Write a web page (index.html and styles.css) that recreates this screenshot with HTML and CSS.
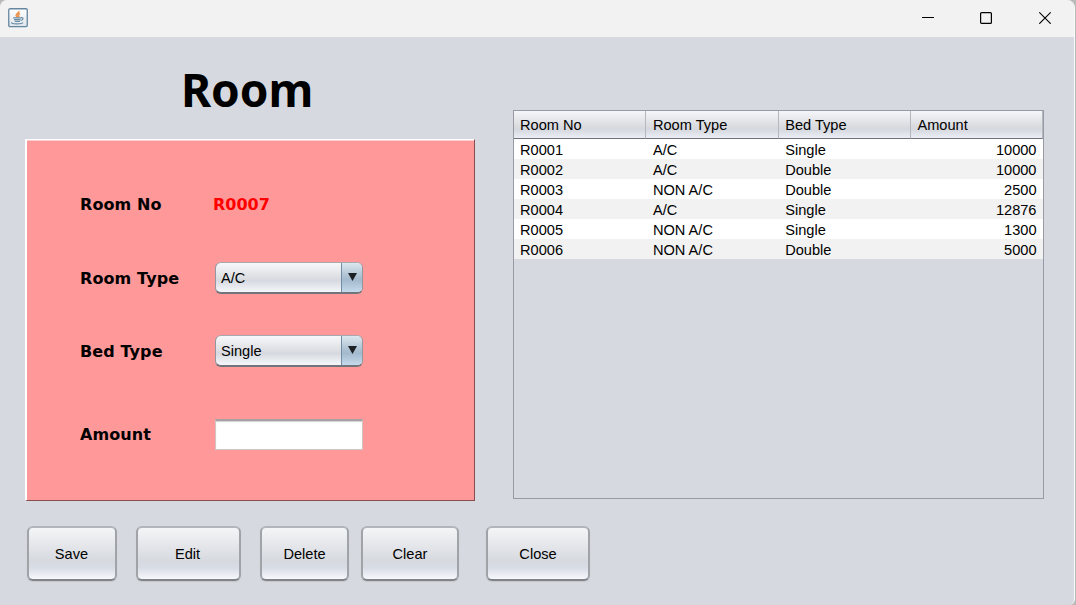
FILE: index.html
```html
<!DOCTYPE html>
<html lang="en">
<head>
<meta charset="utf-8">
<title>Room</title>
<link rel="stylesheet" href="styles.css">
</head>
<body>
<div class="window">
  <header class="titlebar">
    <svg class="app-icon" width="20" height="20" viewBox="0 0 20 20">
      <defs><linearGradient id="tile" x1="0" y1="0" x2="0" y2="1"><stop offset="0" stop-color="#fff"/><stop offset="1" stop-color="#dfe6ec"/></linearGradient></defs>
      <rect x=".75" y=".75" width="18.5" height="17.8" rx="1.2" fill="url(#tile)" stroke="#64869f" stroke-width="1.3"/>
      <path d="M10.8 3.2c.8 1.7-2.9 2.7-2.5 4.2.1.8.8 1.2 1.2 1.9M12 5.5c-1.7.8-2.2 1.5-1.4 2.4.5.6.2 1-.2 1.5" fill="none" stroke="#ee9550" stroke-width="1.7"/>
      <path d="M5.2 9.9h8M6 11.7h6.6M6.8 13.4h5.2" fill="none" stroke="#6c8da5" stroke-width="1.3"/>
      <path d="M13 9.8c2.8-.7 2.5 2.2-.2 2.7M3.8 14.4c-1.5 1.8 9.6 2.1 11.3.3" fill="none" stroke="#6c8da5" stroke-width="1.2"/>
    </svg>
    <div class="controls">
      <svg class="minimize" width="12" height="13" viewBox="0 0 12 13"><path d="M0 6.5h12" stroke="#000"/></svg>
      <svg width="12" height="13" viewBox="0 0 12 13"><rect x=".6" y="1.6" width="10.8" height="10.8" rx="1" fill="none" stroke="#000" stroke-width="1.2"/></svg>
      <svg width="12" height="13" viewBox="0 0 12 13"><path d="M.3 1.3l11.4 11.4M11.7 1.3L.3 12.7" stroke="#000" stroke-width="1.2"/></svg>
    </div>
  </header>
  <main class="content">
    <div class="top">
      <section class="left">
        <h1 class="title">Room</h1>
        <div class="form">
          <label class="label">Room No</label><span class="label room-id">R0007</span>
          <label class="label type-label">Room Type</label>
          <div class="combo"><span class="combo-value">A/C</span><span class="combo-button"><svg width="9" height="8" viewBox="0 0 9 8"><path d="M0 0h9L4.5 8z" fill="#1c2024"/></svg></span></div>
          <label class="label type-label">Bed Type</label>
          <div class="combo"><span class="combo-value">Single</span><span class="combo-button"><svg width="9" height="8" viewBox="0 0 9 8"><path d="M0 0h9L4.5 8z" fill="#1c2024"/></svg></span></div>
          <label class="label amount-label">Amount</label><input class="field" type="text">
        </div>
      </section>
      <div class="table-pane">
        <table class="table">
          <thead><tr><th>Room No</th><th>Room Type</th><th>Bed Type</th><th>Amount</th></tr></thead>
          <tbody>
            <tr><td>R0001</td><td>A/C</td><td>Single</td><td>10000</td></tr>
            <tr><td>R0002</td><td>A/C</td><td>Double</td><td>10000</td></tr>
            <tr><td>R0003</td><td>NON A/C</td><td>Double</td><td>2500</td></tr>
            <tr><td>R0004</td><td>A/C</td><td>Single</td><td>12876</td></tr>
            <tr><td>R0005</td><td>NON A/C</td><td>Single</td><td>1300</td></tr>
            <tr><td>R0006</td><td>NON A/C</td><td>Double</td><td>5000</td></tr>
          </tbody>
        </table>
      </div>
    </div>
    <div class="actions">
      <button class="button save">Save</button>
      <button class="button edit">Edit</button>
      <button class="button delete">Delete</button>
      <button class="button clear">Clear</button>
      <button class="button close">Close</button>
    </div>
  </main>
</div>
</body>
</html>
```
FILE: styles.css
```css
* { box-sizing: border-box; }
body {
  margin: 0;
  height: 605px;
  overflow: hidden;
  background: #b9b9b9;
  font: 14.6px "Liberation Sans", Arial, sans-serif;
  color: #000;
}
.window {
  display: flex;
  flex-direction: column;
  width: 1075px;
  height: 605px;
  overflow: hidden;
  border-right: 1px solid #fafafa;
  border-radius: 7px 8px 6px 0;
  background: #d6d9df;
}
.titlebar {
  flex: none;
  display: flex;
  justify-content: space-between;
  height: 37px;
  padding: 8px 23px 0 8px;
  background: #f2f2f2;
}
.controls { display: flex; gap: 47px; padding-top: 3px; }
.minimize { margin-right: -1px; }
.content { flex: 1; padding: 26px 0 0 25px; }
.top { display: flex; height: 438px; }
.left { width: 450px; }
.title {
  margin: 0;
  height: 76px;
  padding-left: 156px;
  font: bold 46px/52px "Noto Sans", "Open Sans", sans-serif;
  letter-spacing: -0.1px;
}
.form {
  display: grid;
  grid-template-columns: 134px 149px;
  grid-template-rows: 32px 32px 32px 32px;
  row-gap: 41px;
  align-items: center;
  width: 450px;
  height: 362px;
  padding: 49px 0 0 53px;
  border: 1px solid #fff;
  border-left-width: 2px;
  border-right-color: #8a4c4e;
  border-bottom-color: #8a4c4e;
  background: #ff9999;
  box-shadow: inset 0 1px #ffcfcf;
}
.label { font: bold 16px/20px "DejaVu Sans", sans-serif; letter-spacing: 0.1px; }
.room-id { color: red; margin-left: -1px; letter-spacing: 0; }
.type-label { margin-top: 2px; }
.amount-label { margin-top: 21px; }
.combo {
  display: flex;
  width: 148px;
  height: 32px;
  margin: 0 0 0 1px;
  border: 1.5px solid #92979f;
  border-top-color: #a7a9af;
  border-bottom: 2px solid #70747b;
  border-radius: 6px;
  overflow: hidden;
  background: linear-gradient(#f7f8fa, #dfe1e5 45%, #d6d9df 60%, #f5f7fc);
}
.combo-value { flex: 1; padding-left: 5px; line-height: 31px; }
.combo-button {
  display: flex;
  align-items: center;
  justify-content: center;
  width: 21px;
  padding-bottom: 1px;
  border-left: 1px solid #708da5;
  background: linear-gradient(#dce7ef, #a9bed0 50%, #a4bace 60%, #c5daec);
}
.field {
  align-self: end;
  width: 148px;
  height: 31px;
  margin: 0 0 -10px 1px;
  border: 1px solid #d0c4c4;
  border-top: 2px solid #a8a1a3;
  background: #fff;
  box-shadow: inset 0 1px 1px #d0d0d0;
  outline: 0;
}
.table-pane {
  width: 531px;
  height: 389px;
  margin: 47px 0 0 38px;
  border: 1px solid #989ba5;
}
.table { width: 529px; border-collapse: separate; border-spacing: 0; table-layout: fixed; }
.table th {
  height: 28px;
  padding: 0 6px;
  border-right: 1px solid #b4b7be;
  border-bottom: 1px solid #6d717a;
  background: linear-gradient(#f5f6f8, #d8dade 60%, #d6d9df 70%, #eceef5);
  font-weight: normal;
  text-align: left;
}
.table td { height: 20px; padding: 2px 6px 0; line-height: 18px; background: #fff; }
.table th:nth-child(n+2), .table td:nth-child(n+2) { padding-left: 6.7px; }
.table tr:nth-child(even) td { background: #f2f2f2; }
.table td:last-child { padding-right: 6.5px; text-align: right; }
.actions { display: flex; padding: 25px 0 0 2px; }
.button {
  height: 55px;
  padding: 1px 0 0;
  border: 2px solid #a0a3a7;
  border-top-color: #b2b5b9;
  border-bottom-color: #808388;
  border-radius: 6px;
  background: linear-gradient(#f4f5f7, #d6d9df 65%, #d8dce5 78%, #f7f8fc);
  box-shadow: 0 1px 1px #c5c8cd;
  font: inherit;
  color: inherit;
}
.save { width: 90px; padding-right: 1px; }
.edit { width: 105px; margin-left: 19px; padding-right: 2px; }
.delete { width: 89px; margin-left: 19px; }
.clear { width: 98px; margin-left: 12px; }
.close { width: 104px; margin-left: 27px; }
```
